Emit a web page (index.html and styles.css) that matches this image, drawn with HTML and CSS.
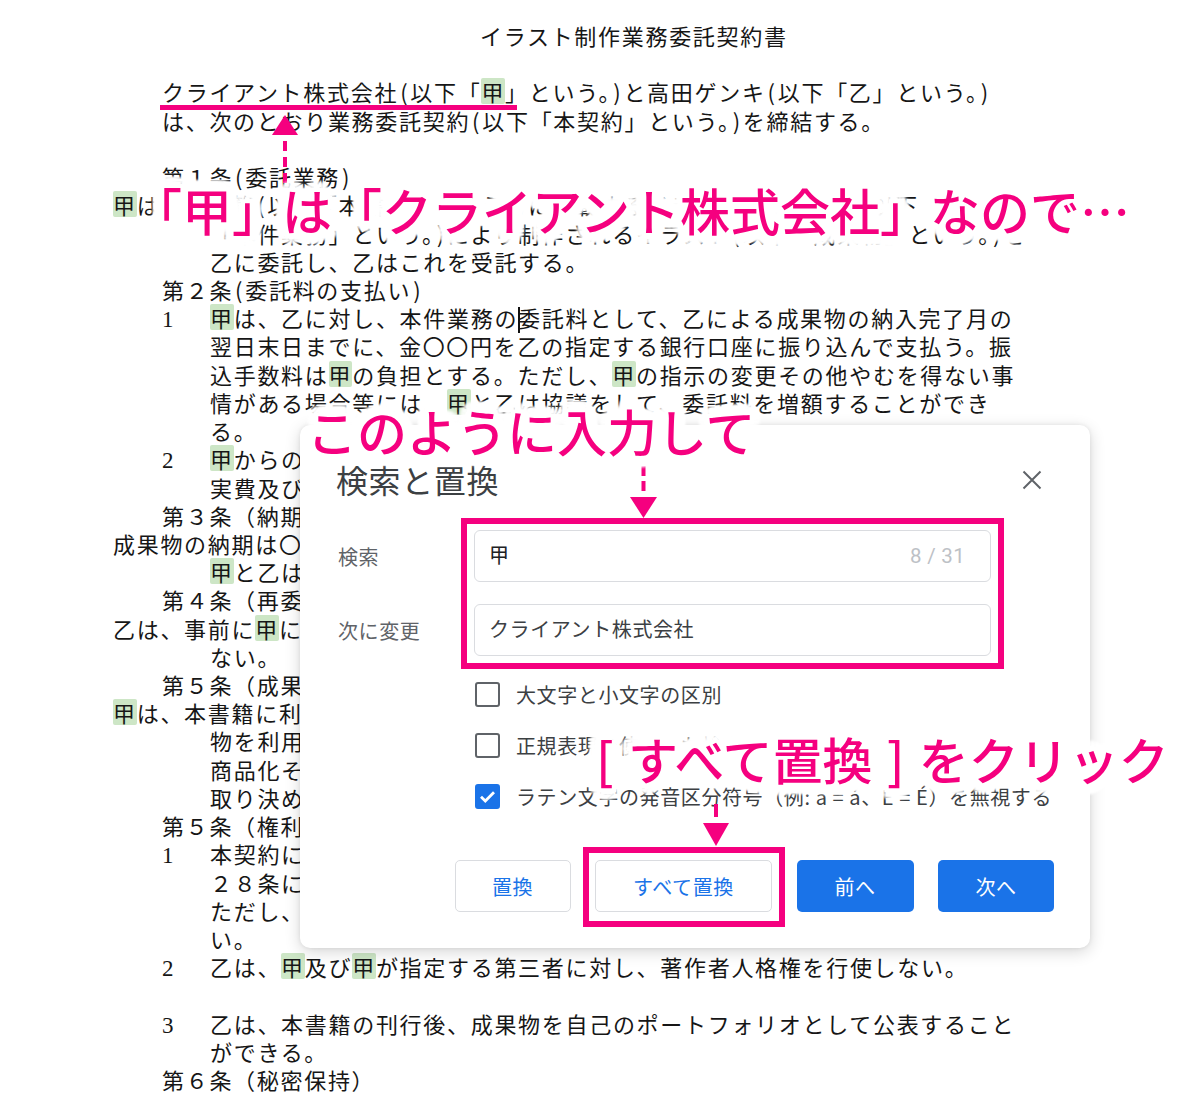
FILE: index.html
```html
<!DOCTYPE html>
<html lang="ja">
<head>
<meta charset="utf-8">
<title>検索と置換</title>
<link rel="stylesheet" href="styles.css">
</head>
<body>
<div class="page">
  <div class="doc">
    <div class="ln title">イラスト制作業務委託契約書</div>
    <div class="ln"></div>
    <div class="ln">クライアント株式会社<span class="p">(</span>以下「<span class="hl">甲</span>」という。<span class="p">)</span>と高田ゲンキ<span class="p">(</span>以下「乙」という。<span class="p">)</span></div>
    <div class="ln">は、次のとおり業務委託契約<span class="p">(</span>以下「本契約」という。<span class="p">)</span>を締結する。</div>
    <div class="ln"></div>
    <div class="ln">第１条<span class="p">(</span>委託業務<span class="p">)</span></div>
    <div class="ln out"><span class="hl">甲</span>は、本書籍<span class="p">(</span>以下「本書籍」という。<span class="p">)</span>に掲載するイラストの制作業務<span class="p">(</span>以下</div>
    <div class="ln in">「本件業務」という。<span class="p">)</span>により制作されるイラスト<span class="p">(</span>以下「成果物」という。<span class="p">)</span>を</div>
    <div class="ln in">乙に委託し、乙はこれを受託する。</div>
    <div class="ln">第２条<span class="p">(</span>委託料の支払い<span class="p">)</span></div>
    <div class="ln"><span class="num">1</span><span class="hl">甲</span>は、乙に対し、本件業務の<span class="cursor"></span>委託料として、乙による成果物の納入完了月の</div>
    <div class="ln in">翌日末日までに、金〇〇円を乙の指定する銀行口座に振り込んで支払う。振</div>
    <div class="ln in">込手数料は<span class="hl">甲</span>の負担とする。ただし、<span class="hl">甲</span>の指示の変更その他やむを得ない事</div>
    <div class="ln in">情がある場合等には、<span class="hl">甲</span>と乙は協議をして、委託料を増額することができ</div>
    <div class="ln in">る。</div>
    <div class="ln"><span class="num">2</span><span class="hl">甲</span>からの要請により乙が出張した場合、<span class="hl">甲</span>は乙に対し、交通費等の</div>
    <div class="ln in">実費及び日当を支払う。</div>
    <div class="ln">第３条（納期）</div>
    <div class="ln out">成果物の納期は〇〇〇〇年〇月〇日とする。ただし、やむを得ない事情がある場合、</div>
    <div class="ln in"><span class="hl">甲</span>と乙は協議の上、納期を変更することができる。</div>
    <div class="ln">第４条（再委託）</div>
    <div class="ln out">乙は、事前に<span class="hl">甲</span>に書面で承諾を得なければ、本件業務を第三者に再委託でき</div>
    <div class="ln in">ない。</div>
    <div class="ln">第５条（成果物の利用）</div>
    <div class="ln out"><span class="hl">甲</span>は、本書籍に利用する目的で成果物を使用できる。本書籍以外の目的で成果</div>
    <div class="ln in">物を利用する場合は、甲乙協議の上、別途使用料を定める。また、成果物の</div>
    <div class="ln in">商品化その他の二次利用については、甲乙協議の上、その条件を別途</div>
    <div class="ln in">取り決める。</div>
    <div class="ln">第５条（権利の帰属）</div>
    <div class="ln"><span class="num">1</span>本契約に基づき乙が制作した成果物の著作権（著作権法第２７条及び第</div>
    <div class="ln in">２８条に定める権利を含む。）は、乙に帰属する。</div>
    <div class="ln in">ただし、甲は本書籍の刊行に必要な範囲で成果物を利用することができる</div>
    <div class="ln in">い。</div>
    <div class="ln"><span class="num">2</span>乙は、<span class="hl">甲</span>及び<span class="hl">甲</span>が指定する第三者に対し、著作者人格権を行使しない。</div>
    <div class="ln"></div>
    <div class="ln"><span class="num">3</span>乙は、本書籍の刊行後、成果物を自己のポートフォリオとして公表すること</div>
    <div class="ln in">ができる。</div>
    <div class="ln">第６条（秘密保持）</div>
  </div>

  <div class="underline"></div>
  <svg class="arrow-up" width="28" height="72" viewBox="0 0 28 72">
    <polygon points="14,1 27,21 1,21" fill="#f5007f"/>
    <line x1="14" y1="27" x2="14" y2="72" stroke="#f5007f" stroke-width="4" stroke-dasharray="10 6"/>
  </svg>

  <div class="anno anno1">「甲」は「クライアント株式会社」なので…</div>

  <div class="dialog">
    <div class="dlg-head">
      <div class="dlg-title">検索と置換</div>
      <svg class="close" width="24" height="24" viewBox="0 0 24 24">
        <path d="M3.5 3.5 L20.5 20.5 M20.5 3.5 L3.5 20.5" stroke="#5f6368" stroke-width="2" fill="none"/>
      </svg>
    </div>
    <div class="row first">
      <div class="label">検索</div>
      <div class="input"><span class="val strong">甲</span><span class="count">8 / 31</span></div>
    </div>
    <div class="row">
      <div class="label">次に変更</div>
      <div class="input"><span class="val">クライアント株式会社</span></div>
    </div>
    <div class="opts">
      <div class="opt"><span class="cb"></span><span class="opt-label">大文字と小文字の区別</span></div>
      <div class="opt"><span class="cb"></span><span class="opt-label">正規表現を使用した検索</span></div>
      <div class="opt"><span class="cb checked"><svg width="21" height="21" viewBox="0 0 21 21"><path d="M4 10.8 L8.3 15 L17 6.3" stroke="#fff" stroke-width="2.8" fill="none"/></svg></span><span class="opt-label">ラテン文字の発音区分符号（例: a = á、E = É）を無視する</span></div>
    </div>
    <div class="btns">
      <div class="btn outline w116">置換</div>
      <div class="btn outline w177">すべて置換</div>
      <div class="btn fill w117">前へ</div>
      <div class="btn fill w116">次へ</div>
    </div>
    <div class="pinkbox box1"></div>
    <div class="pinkbox box2"></div>
  </div>

  <svg class="arrow-dn1" width="27" height="53" viewBox="0 0 27 53">
    <line x1="13.5" y1="0" x2="13.5" y2="25" stroke="#f5007f" stroke-width="4" stroke-dasharray="10 5"/>
    <polygon points="0,31 27,31 13.5,52" fill="#f5007f"/>
  </svg>
  <svg class="arrow-dn2" width="26" height="46" viewBox="0 0 26 46">
    <line x1="13" y1="4" x2="13" y2="17" stroke="#f5007f" stroke-width="4"/>
    <polygon points="0,23 26,23 13,46" fill="#f5007f"/>
  </svg>

  <div class="anno anno2">このように入力して</div>
  <div class="anno anno3">[ すべて置換 ] をクリック</div>
</div>
</body>
</html>
```

FILE: styles.css
```css
* {
  box-sizing: border-box;
  margin: 0;
  padding: 0;
}

body {
  background: #fff;
  font-family: "Noto Sans CJK JP", "Noto Sans", sans-serif;
  color: #161616;
}

.page {
  position: relative;
  width: 1200px;
  height: 1098px;
  overflow: hidden;
}

/* ---------- document ---------- */
.doc {
  padding: 21px 0 0 162px;
  font-size: 22px;
  line-height: 28.22px;
  letter-spacing: 1.7px;
}

.ln {
  height: 28.22px;
  white-space: nowrap;
}

.title {
  padding-left: 318px;
}

.out {
  margin-left: -49px;
}

.in {
  padding-left: 48px;
}

.p {
  padding: 0 1px 0 2px;
}

.num {
  display: inline-block;
  width: 48px;
  font-family: "Liberation Serif", serif;
  font-size: 23px;
  letter-spacing: 0;
}

.hl {
  display: inline-block;
  line-height: 26px;
  background: #cde6c6;
  border-radius: 2px;
}

.cursor {
  display: inline-block;
  width: 2px;
  height: 26px;
  background: #111;
  vertical-align: -6px;
  margin-right: -2px;
}

/* ---------- annotations ---------- */
.underline {
  position: absolute;
  left: 160px;
  top: 105px;
  width: 357px;
  height: 5px;
  background: #f5007f;
}

.arrow-up {
  position: absolute;
  left: 271px;
  top: 114px;
}

.arrow-dn1 {
  position: absolute;
  left: 630px;
  top: 466px;
  z-index: 3;
}

.arrow-dn2 {
  position: absolute;
  left: 703px;
  top: 800px;
  z-index: 3;
}

.anno {
  position: absolute;
  z-index: 4;
  font-size: 50px;
  line-height: 50px;
  font-weight: 500;
  color: #f5007f;
  white-space: nowrap;
  text-shadow:
    11px 0 3px #fff, 10.2px 4.2px 3px #fff, 7.8px 7.8px 3px #fff, 4.2px 10.2px 3px #fff,
    0 11px 3px #fff, -4.2px 10.2px 3px #fff, -7.8px 7.8px 3px #fff, -10.2px 4.2px 3px #fff,
    -11px 0 3px #fff, -10.2px -4.2px 3px #fff, -7.8px -7.8px 3px #fff, -4.2px -10.2px 3px #fff,
    0 -11px 3px #fff, 4.2px -10.2px 3px #fff, 7.8px -7.8px 3px #fff, 10.2px -4.2px 3px #fff,
    6px 0 0 #fff, 4.2px 4.2px 0 #fff, 0 6px 0 #fff, -4.2px 4.2px 0 #fff,
    -6px 0 0 #fff, -4.2px -4.2px 0 #fff, 0 -6px 0 #fff, 4.2px -4.2px 0 #fff,
    3px 0 0 #fff, 0 3px 0 #fff, -3px 0 0 #fff, 0 -3px 0 #fff;
}

.anno1 {
  left: 132px;
  top: 184px;
}

.anno2 {
  left: 307px;
  top: 405px;
}

.anno3 {
  left: 596px;
  top: 733px;
  word-spacing: 3px;
}

/* ---------- dialog ---------- */
.dialog {
  position: absolute;
  z-index: 2;
  left: 300px;
  top: 425px;
  width: 790px;
  height: 523px;
  padding: 36px;
  background: #fff;
  border-radius: 10px;
  box-shadow: 0 4px 16px rgba(0, 0, 0, 0.16), 0 0 4px rgba(0, 0, 0, 0.08);
  font-size: 20px;
  letter-spacing: 0.6px;
  color: #3c4043;
}

.dlg-head {
  display: flex;
  justify-content: space-between;
  align-items: center;
  height: 40px;
}

.dlg-title {
  font-size: 32px;
  line-height: 40px;
  letter-spacing: 0.6px;
  margin-top: -4px;
  color: #3c4043;
}

.close {
  margin-right: 10px;
  margin-top: -2px;
}

.row {
  display: flex;
  align-items: center;
  margin-top: 22px;
}

.row.first {
  margin-top: 29px;
}

.label {
  width: 138px;
  padding-left: 2px;
  color: #5f6368;
}

.input {
  display: flex;
  align-items: center;
  justify-content: space-between;
  width: 517px;
  height: 52px;
  padding: 0 25px 0 14px;
  border: 1px solid #dadce0;
  border-radius: 6px;
}

.val {
  color: #3c4043;
  margin-top: -3px;
}

.val.strong {
  color: #202124;
}

.count {
  font-family: Roboto, "Noto Sans", sans-serif;
  font-size: 20.5px;
  color: #bdc1c6;
  letter-spacing: 0.3px;
}

.opts {
  margin: 12.5px 0 0 139px;
}

.opt {
  display: flex;
  align-items: center;
  gap: 16px;
  height: 51px;
}

.cb {
  display: flex;
  align-items: center;
  justify-content: center;
  width: 25px;
  height: 25px;
  border: 2.5px solid #5f6368;
  border-radius: 3px;
  flex: none;
}

.cb.checked {
  background: #1a73e8;
  border-color: #1a73e8;
}

.opt-label {
  color: #3c4043;
}

.btns {
  display: flex;
  justify-content: flex-end;
  gap: 24.5px;
  margin-top: 38.5px;
}

.btn {
  display: flex;
  align-items: center;
  justify-content: center;
  height: 52px;
  border-radius: 5px;
}

.btn.outline {
  background: #fff;
  border: 1px solid #dadce0;
  color: #1a73e8;
}

.btn.fill {
  background: #1a73e8;
  color: #fff;
}

.w116 { width: 116px; }
.w117 { width: 117px; }
.w177 { width: 177px; }

.pinkbox {
  position: absolute;
  border: 6px solid #f5007f;
}

.box1 {
  left: 161px;
  top: 93px;
  width: 543px;
  height: 151px;
}

.box2 {
  left: 283px;
  top: 422px;
  width: 202px;
  height: 80px;
}
```
